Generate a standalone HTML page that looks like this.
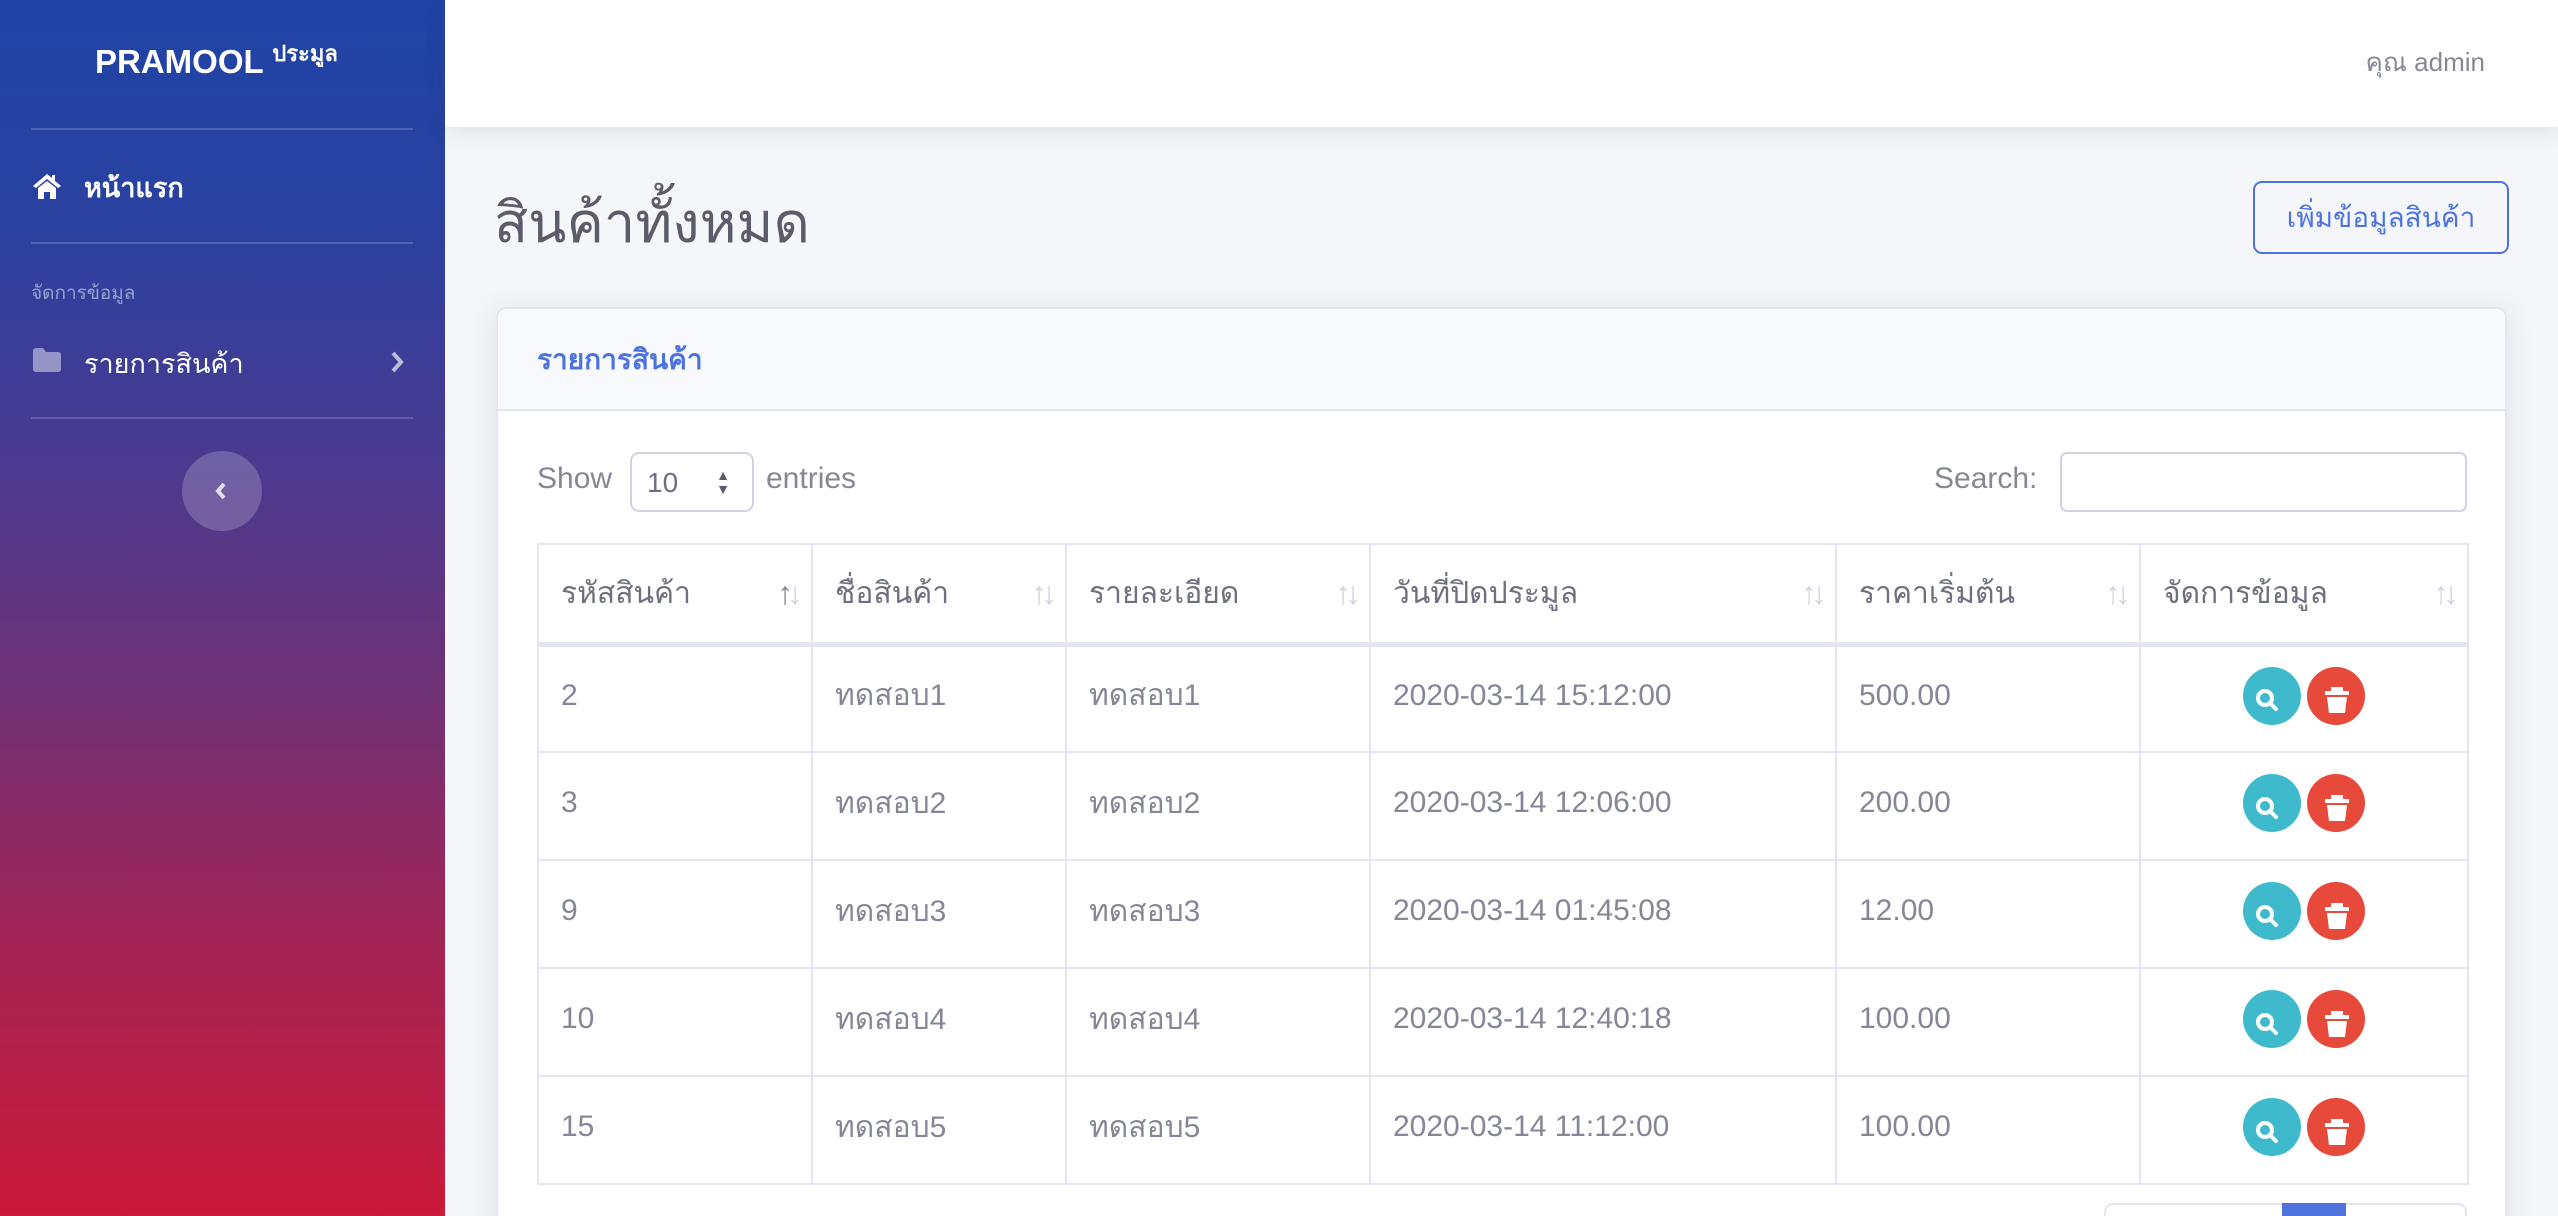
<!DOCTYPE html>
<html style="height:1216px;overflow:hidden"><head><meta charset="utf-8">
<style>
*{box-sizing:border-box;margin:0;padding:0}
body{width:2558px;height:1216px;overflow:hidden;background:#f5f6fa;font-family:"Liberation Sans","Noto Sans CJK SC",sans-serif;color:#858796;position:relative}
.sb{position:absolute;left:0;top:0;width:445px;height:1216px;background:linear-gradient(180deg,#1f44a6 0%,#2a41a0 18%,#4a3a90 38%,#6b3278 55%,#a42454 78%,#cb1a3a 100%)}
.abs{position:absolute}
.hr{position:absolute;left:31px;width:382px;height:2px;background:rgba(255,255,255,.18)}
.top{position:absolute;left:445px;top:0;right:0;height:127px;background:#fff;box-shadow:0 4px 20px rgba(58,59,69,.12)}
.card{position:absolute;left:496px;top:307px;width:2011px;height:1000px;background:#fff;border:2px solid #e3e6f0;border-radius:10px;box-shadow:0 4px 28px rgba(58,59,69,.12);overflow:hidden}
.ch{height:102px;background:#f8f9fc;border-bottom:2px solid #e3e6f0}
table{position:absolute;left:537px;top:543px;border-collapse:collapse;font-size:30px}
td,th{border:2px solid #e3e6f0;padding:0 22px;text-align:left;color:#858796;font-weight:normal;position:relative}
th{height:100px;color:#6e707e;border-bottom:5px solid #e3e6f0}
td{height:108px;padding-bottom:6px}
.ar{position:absolute;right:14px;top:30px;color:#d1d3e2;font-size:32px;letter-spacing:-6px}
.b{display:inline-block;width:58px;height:58px;border-radius:50%;vertical-align:middle;margin:0 3px;position:relative}
.bi{background:#3fbacc}.bd{background:#e74a3b}
</style></head><body>
<div class="sb">
  <div class="abs" style="left:95px;top:36px;color:#fff;font-size:33px;font-weight:bold">PRAMOOL <sup style="font-size:22px">ประมูล</sup></div>
  <div class="hr" style="top:128px"></div>
  <svg class="abs" style="left:32px;top:172px" width="30" height="28" viewBox="0 0 30 28"><path d="M15 2 L1 14 L4 16 L15 7 L26 16 L29 14 L23 9 V3 H20 V6 Z M6 16 V27 H12 V20 H18 V27 H24 V16 L15 9 Z" fill="#fff"/></svg>
  <div class="abs" style="left:84px;top:166px;color:#fff;font-size:27px;font-weight:bold">หน้าแรก</div>
  <div class="hr" style="top:242px"></div>
  <div class="abs" style="left:31px;top:278px;color:rgba(255,255,255,.5);font-size:19px">จัดการข้อมูล</div>
  <svg class="abs" style="left:33px;top:348px" width="28" height="24" viewBox="0 0 28 24"><path d="M0 3 Q0 0 3 0 H10 L13 4 H25 Q28 4 28 7 V21 Q28 24 25 24 H3 Q0 24 0 21 Z" fill="rgba(255,255,255,.45)"/></svg>
  <div class="abs" style="left:84px;top:342px;color:#fff;font-size:27px">รายการสินค้า</div>
  <svg class="abs" style="left:390px;top:351px" width="14" height="22" viewBox="0 0 14 22"><path d="M3 2 L11 11 L3 20" stroke="rgba(255,255,255,.65)" stroke-width="4" fill="none"/></svg>
  <div class="hr" style="top:417px"></div>
  <div class="abs" style="left:182px;top:451px;width:80px;height:80px;border-radius:50%;background:rgba(255,255,255,.2)"></div>
  <svg class="abs" style="left:214px;top:481px" width="14" height="20" viewBox="0 0 14 20"><path d="M10 3 L4 10 L10 17" stroke="rgba(255,255,255,.8)" stroke-width="4" fill="none"/></svg>
</div>
<div class="top"><div class="abs" style="right:73px;top:42px;font-size:26px;color:#858796">คุณ admin</div></div>
<div class="abs" style="left:494px;top:178px;font-size:56px;color:#5a5c69">สินค้าทั้งหมด</div>
<div class="abs" style="left:2253px;top:181px;width:256px;height:73px;border:2px solid #4e73df;border-radius:9px;color:#4e73df;font-size:28px;text-align:center;line-height:69px">เพิ่มข้อมูลสินค้า</div>
<div class="card"><div class="ch"></div></div>
<div class="abs" style="left:537px;top:338px;font-size:28px;color:#4e73df;font-weight:bold">รายการสินค้า</div>
<div class="abs" style="left:537px;top:462px;font-size:30px">Show</div>
<div class="abs" style="left:630px;top:452px;width:124px;height:60px;border:2px solid #d1d3e2;border-radius:9px;font-size:28px;color:#6e707e;padding:13px 0 0 15px">10<span style="position:absolute;right:22px;top:14px;font-size:14px;line-height:14px;color:#5a5c69">▲<br>▼</span></div>
<div class="abs" style="left:766px;top:462px;font-size:30px">entries</div>
<div class="abs" style="left:1934px;top:462px;font-size:30px">Search:</div>
<div class="abs" style="left:2060px;top:452px;width:407px;height:60px;border:2px solid #d1d3e2;border-radius:7px;background:#fff"></div>
<table>
<tr><th style="width:274px">รหัสสินค้า<span class="ar"><span style="color:#858796">↑</span>↓</span></th><th style="width:254px">ชื่อสินค้า<span class="ar">↑↓</span></th><th style="width:304px">รายละเอียด<span class="ar">↑↓</span></th><th style="width:466px">วันที่ปิดประมูล<span class="ar">↑↓</span></th><th style="width:304px">ราคาเริ่มต้น<span class="ar">↑↓</span></th><th style="width:328px">จัดการข้อมูล<span class="ar">↑↓</span></th></tr>
<tr><td>2</td><td>ทดสอบ1</td><td>ทดสอบ1</td><td>2020-03-14 15:12:00</td><td>500.00</td><td style="text-align:center"><span class="b bi"></span><span class="b bd"></span></td></tr>
<tr><td>3</td><td>ทดสอบ2</td><td>ทดสอบ2</td><td>2020-03-14 12:06:00</td><td>200.00</td><td style="text-align:center"><span class="b bi"></span><span class="b bd"></span></td></tr>
<tr><td>9</td><td>ทดสอบ3</td><td>ทดสอบ3</td><td>2020-03-14 01:45:08</td><td>12.00</td><td style="text-align:center"><span class="b bi"></span><span class="b bd"></span></td></tr>
<tr><td>10</td><td>ทดสอบ4</td><td>ทดสอบ4</td><td>2020-03-14 12:40:18</td><td>100.00</td><td style="text-align:center"><span class="b bi"></span><span class="b bd"></span></td></tr>
<tr><td>15</td><td>ทดสอบ5</td><td>ทดสอบ5</td><td>2020-03-14 11:12:00</td><td>100.00</td><td style="text-align:center"><span class="b bi"></span><span class="b bd"></span></td></tr>
</table>
<svg class="abs" style="left:2237px;top:671px" width="140" height="510" viewBox="0 0 140 510">
<g id="r">
<circle cx="28" cy="27" r="7" stroke="#fff" stroke-width="4" fill="none"/><path d="M33 32 L39 38" stroke="#fff" stroke-width="4" stroke-linecap="round"/>
<path d="M88 20 H112 V24 H88 Z M94 16 H106 V20 H94 Z M90 26 H110 L108 42 H92 Z" fill="#fff"/>
</g>
<use href="#r" y="108"/><use href="#r" y="216"/><use href="#r" y="324"/><use href="#r" y="432"/>
</svg>
<div class="abs" style="left:2104px;top:1203px;width:363px;height:40px;border:2px solid #e3e6f0;border-radius:9px;background:#fff"></div>
<div class="abs" style="left:2282px;top:1203px;width:64px;height:40px;background:#4e73df"></div>
</body></html>
